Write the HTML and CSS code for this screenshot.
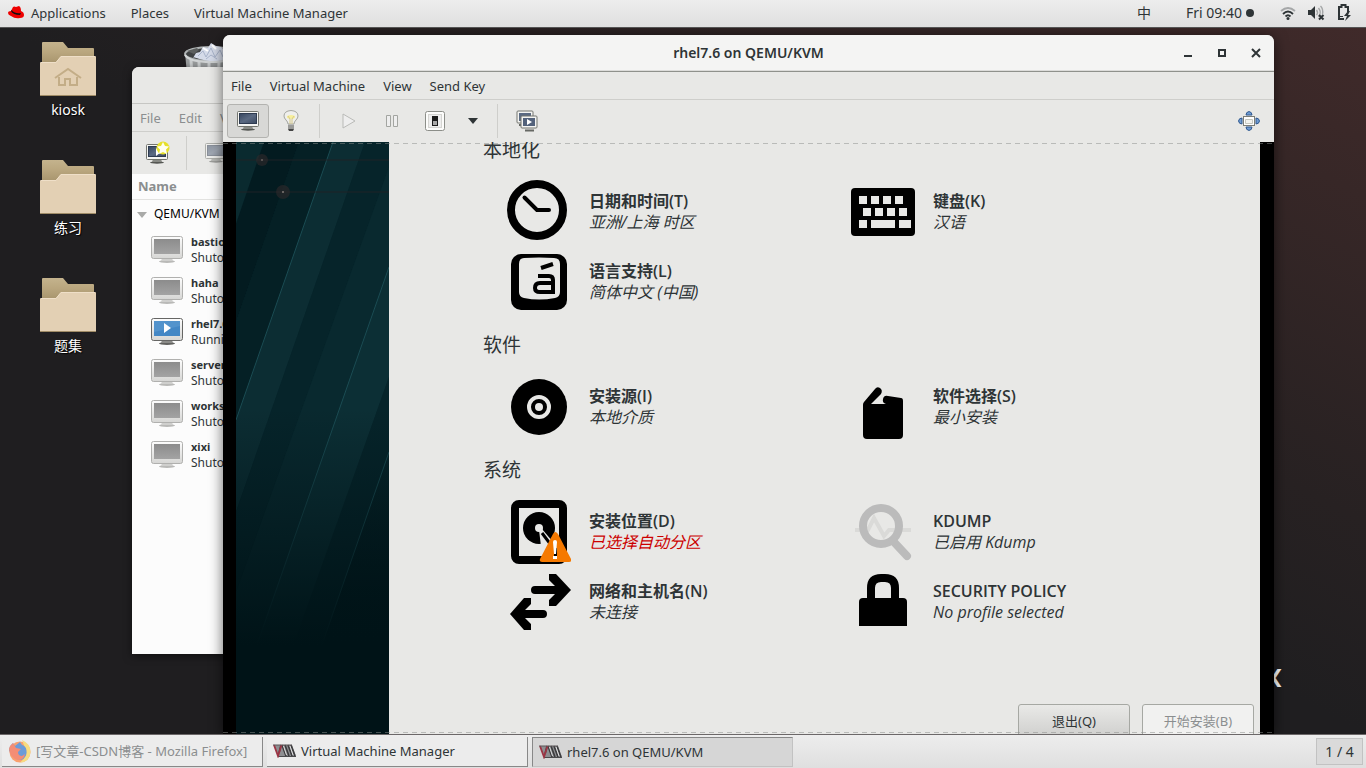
FILE: index.html
```
<!DOCTYPE html>
<html lang="zh-CN">

<head>
    <meta charset="UTF-8">
    <meta name="viewport" content="width=device-width, initial-scale=1.0">
    <title>rhel7.6 on QEMU/KVM</title>
    <link rel="stylesheet" href="styles.css">
</head>

<body>
    <!-- shared icons -->
    <svg class="defs" width="0" height="0" aria-hidden="true">
        <defs>
            <linearGradient id="g-off" x1="0" y1="0" x2="0" y2="1">
                <stop offset="0" stop-color="#8c8c8c" />
                <stop offset="1" stop-color="#a3a3a3" />
            </linearGradient>
            <linearGradient id="g-frame" x1="0" y1="0" x2="0" y2="1">
                <stop offset="0" stop-color="#fdfdfd" />
                <stop offset="1" stop-color="#d6d6d4" />
            </linearGradient>
            <linearGradient id="g-screen" x1="0" y1="0" x2="1" y2="1">
                <stop offset="0" stop-color="#36465f" />
                <stop offset="0.5" stop-color="#5b6a82" />
                <stop offset="1" stop-color="#3c4961" />
            </linearGradient>
            <linearGradient id="g-back" x1="0" y1="0" x2="0" y2="1">
                <stop offset="0" stop-color="#c4b38d" />
                <stop offset="0.5" stop-color="#b9a67e" />
                <stop offset="1" stop-color="#a8956e" />
            </linearGradient>
            <symbol id="vm-off" viewBox="0 0 32 27">
                <ellipse cx="16" cy="25.500" rx="8" ry="1.500" fill="#b9b9b7" />
                <path d="M11 22h10l1 3H10z" fill="#cfcfcd" />
                <rect x="0.500" y="0.500" width="31" height="22" rx="2" fill="url(#g-frame)" stroke="#b0b0ae" />
                <rect x="3" y="3" width="26" height="15" fill="url(#g-off)" />
            </symbol>
            <symbol id="vm-on" viewBox="0 0 32 27">
                <ellipse cx="16" cy="25.500" rx="8" ry="1.500" fill="#62625f" />
                <path d="M11 22h10l1 3H10z" fill="#8b8b88" />
                <rect x="0.500" y="0.500" width="31" height="22" rx="2" fill="url(#g-frame)" stroke="#666664" />
                <rect x="3" y="3" width="26" height="15" fill="#4387c5" />
                <path d="M3 3h26v5L3 14z" fill="#5393cc" />
                <path d="M13 5v10l7-5z" fill="#fff" />
            </symbol>
            <symbol id="monitor" viewBox="0 0 24 20">
                <ellipse cx="12" cy="18.500" rx="7" ry="1.200" fill="#555753" />
                <path d="M8 15h8l1 3H7z" fill="#888a85" />
                <rect x="1.500" y="0.500" width="21" height="15" rx="1" fill="#f4f4f2" stroke="#73756f" />
                <rect x="3.500" y="2.500" width="17" height="10" fill="url(#g-screen)" stroke="#2e3b50" />
            </symbol>
            <symbol id="folder" viewBox="0 0 56 54">
                <path d="M2 21V1q0-1 1-1h20l5 6h25q1 0 1 1v14z" fill="url(#g-back)" />
                <path d="M0 53V21q0-1 1-1h15l5-6h34q1 0 1 1v38z" fill="#e3d0b4" />
                <path d="M0 53.500h56" stroke="#9f8b66" />
                <path d="M1 20.500h15l5-6h34" fill="none" stroke="#efdfc8" />
            </symbol>
            <symbol id="vmm" viewBox="0 0 24 14">
                <path d="M1 1h18l4 11H5z" fill="#8e8f92" />
                <path d="M8 1l-2 8M9 1l4 11M12 1l4 11M15 1l4 11M18 1l4 11" fill="none" stroke="#3c3c3e" stroke-width="1.600" />
                <path d="M10.500 2l3 9M17 2l3 9" stroke="#e0e0e0" />
                <path d="M5 12.500h18" stroke="#4a4a4c" />
                <path d="M1 1l4 11L8.500 1" fill="none" stroke="#9c3444" stroke-width="1.800" />
                <path d="M0 1h19" stroke="#5c5658" />
            </symbol>
        </defs>
    </svg>

    <header class="topbar">
        <nav class="top-menu">
            <button class="flat apps">
                <svg width="16" height="13" viewBox="0 0 16 13">
                    <path d="M0 7q0-2 3-2l2-4q1-1 3 0l3-1q2 1 2 5 3 1 3 4t-4 3Q7 13 3 10 0 9 0 7z" fill="#e00" />
                    <path d="M3 5q2 4 9 4l1-2Q7 8 3.500 4z" fill="#111" />
                </svg>
                Applications
            </button>
            <button class="flat">Places</button>
            <button class="flat">Virtual Machine Manager</button>
        </nav>
        <div class="top-status">
            <button class="flat">中</button>
            <button class="flat clock">Fri 09:40 <span class="dot"></span></button>
            <button class="flat tray" aria-label="System">
                <svg width="16" height="16" viewBox="0 0 16 16" fill="none" stroke="#2e3436" stroke-width="1.800">
                    <path d="M1 6q7-6 14 0" stroke="#a5a7a8" />
                    <path d="M3 9q5-5 10 0M5.500 11.500q2.500-2.500 5 0" />
                    <circle cx="8" cy="13.500" r="1.500" fill="#2e3436" stroke="none" />
                </svg>
                <svg width="18" height="16" viewBox="0 0 18 16">
                    <path d="M1 5h3l4-4v13L4 10H1z" fill="#2e3436" />
                    <path d="M9.500 5q2 2.500 0 5M11.500 3q3.500 4.500 0 9M13.500 1q3 3 2 8" fill="none" stroke="#a5a7a8" stroke-width="1.400" />
                    <path d="M12 10l4.500 4.500M16.500 10L12 14.500" stroke="#2e3436" stroke-width="2" />
                </svg>
                <svg width="16" height="17" viewBox="0 0 16 17">
                    <path d="M12 8V3H9.500V1h-4v2H3v12h5" fill="none" stroke="#2e3436" stroke-width="2" />
                    <path d="M4 12h3v1H4z" fill="#2e3436" />
                    <path d="M12 7l-4 5h3l-2 5 6-6h-3l2-4z" fill="#2e3436" />
                </svg>
            </button>
        </div>
    </header>

    <main class="desktop">
        <div class="shortcuts">
            <a class="shortcut" href="#kiosk">
                <svg width="56" height="54" viewBox="0 0 56 54">
                    <use href="#folder" width="56" height="54" />
                    <path d="M15 36l13-9 13 9M19 35v8h6v-6h5v6h7v-8" fill="none" stroke="#c3ad87" stroke-width="2" />
                </svg>
                <span>kiosk</span>
            </a>
            <a class="shortcut" href="#practice">
                <svg width="56" height="54"><use href="#folder" width="56" height="54" /></svg>
                <span>练习</span>
            </a>
            <a class="shortcut" href="#questions">
                <svg width="56" height="54"><use href="#folder" width="56" height="54" /></svg>
                <span>题集</span>
            </a>
        </div>

        <svg class="trash" width="56" height="56" viewBox="0 0 56 56">
            <path d="M1 10l4 42q22 7 44 0l4-42z" fill="#9a9d9e" />
            <path d="M7 17l2 34M15 19l1 34M25 20v34M35 19l-1 34" stroke="#cdd0d1" stroke-width="3" />
            <ellipse cx="27" cy="11" rx="26" ry="7" fill="#3f4243" stroke="#b0b4b5" stroke-width="2" />
            <path d="M9 15l3-5 4-1 3-5 5 1 3-5 5 3 5 1 5 5 7 6q-18 7-40-1z" fill="#d5dbe9" />
            <path d="M3 8l10-3 2 2-5 4z" fill="#5c5f5e" />
            <path d="M14 13l5-5 3 6 5-9 4 9 5-7 3 7M22 16l5-4 6 4" fill="none" stroke="#a9b4cb" />
            <path d="M19 5l5 3M28 2l4 4" stroke="#fff" stroke-width="2" />
            <path d="M1 12q4 7 26 7t26-7" fill="none" stroke="#d3d6d7" stroke-width="2" />
        </svg>

        <div class="guest-arrow">❮</div>

        <!-- manager window, in the background -->
        <section class="window manager">
            <div class="titlebar"></div>
            <nav class="menubar">
                <button class="flat">File</button>
                <button class="flat">Edit</button>
                <button class="flat">View</button>
            </nav>
            <div class="toolbar">
                <button class="tool" aria-label="New">
                    <svg width="26" height="24" viewBox="0 0 26 24">
                        <use href="#monitor" x="0" y="3" width="24" height="20" />
                        <path d="M11 7v8l5-4z" fill="#fff" />
                        <circle cx="18" cy="7" r="6.500" fill="#e6e02a" />
                        <path d="M18 1l2 4 4 .5-3 3 1 4.500-4-2-4 2 1-4.500-3-3 4-.5z" fill="#fffff0" />
                    </svg>
                </button>
                <span class="sep"></span>
                <button class="tool dim" aria-label="Open">
                    <svg width="24" height="20"><use href="#monitor" width="24" height="20" /></svg>
                </button>
            </div>
            <table class="vm-list">
                <thead>
                    <tr><th>Name</th></tr>
                </thead>
                <tbody>
                    <tr class="host"><td><span class="tri"></span>QEMU/KVM</td></tr>
                </tbody>
            </table>
        </section>

        <!-- console window -->
        <section class="window console">
            <div class="titlebar">
                <h1>rhel7.6 on QEMU/KVM</h1>
                <div class="win-buttons">
                    <button aria-label="Minimize"><svg width="10" height="10"><path d="M1 8h8" stroke="#2e3436" stroke-width="2" /></svg></button>
                    <button aria-label="Maximize"><svg width="10" height="10"><rect x="2" y="2" width="6" height="6" fill="none" stroke="#2e3436" stroke-width="2" /></svg></button>
                    <button aria-label="Close"><svg width="10" height="10"><path d="M1 1l8 8M9 1L1 9" stroke="#2e3436" stroke-width="2" /></svg></button>
                </div>
            </div>
            <nav class="menubar">
                <button class="flat">File</button>
                <button class="flat">Virtual Machine</button>
                <button class="flat">View</button>
                <button class="flat">Send Key</button>
            </nav>
            <div class="toolbar">
                <button class="tool active" aria-label="Console">
                    <svg width="24" height="20"><use href="#monitor" width="24" height="20" /></svg>
                </button>
                <button class="tool" aria-label="Details">
                    <svg width="16" height="22" viewBox="0 0 16 22">
                        <path d="M5 14q0-2-2-4Q1 8 1 6q0-5 7-5.500Q15 1 15 6q0 2-2 4t-2 4z" fill="#efefec" stroke="#a3a59f" />
                        <path d="M4 6q4-2 8 0v2q-4 2-8 0z" fill="#f7ef9c" />
                        <path d="M5 6l2 3v5M11 6L9 9v5" fill="none" stroke="#d6c98a" />
                        <path d="M5 14h6v5H5z" fill="#b9bab7" />
                        <path d="M5 16h6M5 18h6" stroke="#7c7d7a" />
                        <path d="M5 19h6l-1 2H6z" fill="#444" />
                    </svg>
                </button>
                <span class="sep"></span>
                <button class="tool" aria-label="Run">
                    <svg width="16" height="16"><path d="M2 1l12 7-12 7z" fill="#eee" stroke="#b9bab7" /></svg>
                </button>
                <button class="tool" aria-label="Pause">
                    <svg width="14" height="14"><path d="M1.500 1.500h4v11h-4zM8.500 1.500h4v11h-4z" fill="#eee" stroke="#a3a5a1" /></svg>
                </button>
                <button class="tool" aria-label="Shut down">
                    <svg width="20" height="20" viewBox="0 0 20 20">
                        <rect x="0.500" y="0.500" width="19" height="19" rx="2" fill="#fcfcfb" stroke="#8c8e89" />
                        <rect x="3.500" y="3.500" width="13" height="13" fill="#eee" stroke="#d5d5d2" />
                        <path d="M7 5h6v10H7z" fill="#1c1c1c" />
                        <path d="M8 10h4v4H8z" fill="#a8a8a8" />
                    </svg>
                </button>
                <button class="tool narrow" aria-label="Shut down options">
                    <svg width="10" height="6"><path d="M0 0h10L5 6z" fill="#2e3436" /></svg>
                </button>
                <span class="sep"></span>
                <button class="tool" aria-label="Snapshots">
                    <svg width="22" height="22" viewBox="0 0 22 22">
                        <rect x="1" y="1" width="16" height="12" rx="1" fill="#f4f4f2" stroke="#73756f" />
                        <rect x="3" y="3" width="12" height="8" fill="#5b6a82" />
                        <path d="M3 15h5M9 20.500h9" stroke="#666864" stroke-width="2" />
                        <rect x="5" y="6" width="16" height="12" rx="1" fill="#f4f4f2" stroke="#73756f" />
                        <rect x="7" y="8" width="12" height="8" fill="#53627b" />
                        <path d="M11 9v6l5-3z" fill="#fff" />
                    </svg>
                </button>
                <button class="tool fullscreen" aria-label="Full screen">
                    <svg width="22" height="20" viewBox="0 0 22 20">
                        <g fill="#6d9bd3" stroke="#31598f">
                            <path d="M8 4q0-3 3-3.500 3 .5 3 3.500zM8 16q0 3 3 3.500 3-.5 3-3.500zM4 7Q1 7 .5 10 1 13 4 13zM18 7q3 0 3.500 3-.5 3-3.500 3z" />
                        </g>
                        <rect x="5.500" y="5.500" width="11" height="9" fill="#fff" stroke="#7b7d77" />
                        <path d="M7.500 8.500h7v4h-7z" fill="#f3f3ef" stroke="#c6c8c0" />
                    </svg>
                </button>
            </div>

            <div class="guest">
                <svg class="stripes" viewBox="0 0 153 592" preserveAspectRatio="none">
                    <defs>
                        <linearGradient id="g-side" x1="0" y1="0" x2="0" y2="1">
                            <stop offset="0" stop-color="#08262b" />
                            <stop offset="0.500" stop-color="#08262c" />
                            <stop offset="0.850" stop-color="#001418" />
                            <stop offset="1" stop-color="#001216" />
                        </linearGradient>
                        <linearGradient id="g-fade" gradientUnits="userSpaceOnUse" x1="0" y1="0" x2="0" y2="592">
                            <stop offset="0.450" stop-color="#001317" stop-opacity="0" />
                            <stop offset="0.850" stop-color="#001317" />
                        </linearGradient>
                    </defs>
                    <path d="M0 0h153v592H0z" fill="url(#g-side)" />
                    <path d="M0 0h28L0 82z" fill="#0a2a2f" />
                    <path d="M28 0h35L0 180V82z" fill="#031b20" />
                    <path d="M63 0h34L0 278v-98z" fill="#052025" />
                    <path d="M97 0h32L0 370V278z" fill="#0c2d33" />
                    <path d="M129 0h24v25L0 450v-80z" fill="#06242a" />
                    <path d="M153 25v100L8 540H0v-90z" fill="#09292f" />
                    <path d="M153 125v110L40 560H0z" fill="#0c2f35" />
                    <path d="M153 235v75L60 580H30z" fill="#06242a" />
                    <path d="M97 0L0 278M153 125L15 520M153 310L80 520" fill="none" stroke="#1b4c53" />
                    <path d="M0 18h153M0 50h153" stroke="#1f2327" />
                    <circle cx="26" cy="18" r="6" fill="#302a2c" opacity="0.600" />
                    <circle cx="47" cy="50" r="7" fill="#302a2c" opacity="0.600" />
                    <circle cx="26" cy="18" r="1" fill="#66605e" />
                    <circle cx="47" cy="50" r="1" fill="#807874" />
                    <path d="M0 0h153v592H0z" fill="url(#g-fade)" />
                </svg>

                <div class="hub">
                    <div class="hub-scroll">
                        <section class="category">
                            <h2>本地化</h2>
                            <div class="spokes">
                                <button class="spoke">
                                    <svg width="64" height="64" viewBox="0 0 64 64">
                                        <circle cx="30" cy="30" r="26" fill="none" stroke="#000" stroke-width="8" />
                                        <path d="M17.500 17.500L30 30h12" fill="none" stroke="#000" stroke-width="4" stroke-linecap="round" />
                                    </svg>
                                    <span class="spoke-text"><b>日期和时间(T)</b><i>亚洲/上海 时区</i></span>
                                </button>
                                <button class="spoke">
                                    <svg width="64" height="64" viewBox="0 0 64 64">
                                        <rect y="8" width="64" height="48" rx="4" />
                                        <path fill="#e8e8e6" d="M8 16h8v8H8zM20 16h8v8h-8zM32 16h8v8h-8zM44 16h8v8h-8zM12 28h8v8h-8zM24 28h8v8h-8zM36 28h8v8h-8zM48 28h8v8h-8zM8 40h8v8H8zM20 40h24v8H20zM48 40h12v8H48z" />
                                    </svg>
                                    <span class="spoke-text"><b>键盘(K)</b><i>汉语</i></span>
                                </button>
                                <button class="spoke">
                                    <svg width="64" height="64" viewBox="0 0 64 64">
                                        <rect x="4" y="4" width="56" height="56" rx="10" />
                                        <path d="M17 8q15-1 30 0 6 0 6 6v28q0 5-5 6-16 3-31 0-5-1-5-6V14q0-6 5-6z" fill="#e8e8e6" />
                                        <path d="M34 18l12-4M31 26h11q4 0 4 4v12H33q-5 0-5-4 0-5 5-5h12" fill="none" stroke="#000" stroke-width="4" />
                                    </svg>
                                    <span class="spoke-text"><b>语言支持(L)</b><i>简体中文 (中国)</i></span>
                                </button>
                            </div>
                        </section>

                        <section class="category">
                            <h2>软件</h2>
                            <div class="spokes">
                                <button class="spoke">
                                    <svg width="64" height="64" viewBox="0 0 64 64">
                                        <circle cx="32" cy="32" r="28" />
                                        <circle cx="32" cy="32" r="10" fill="none" stroke="#e8e8e6" stroke-width="4" />
                                        <circle cx="32" cy="32" r="4" fill="#e8e8e6" />
                                    </svg>
                                    <span class="spoke-text"><b>安装源(I)</b><i>本地介质</i></span>
                                </button>
                                <button class="spoke">
                                    <svg width="64" height="64" viewBox="0 0 64 64">
                                        <path d="M12 30q0-2 1-3l11-13q2-3 5-1t1 6L20 29h15q-4-1-3-5t5-3l13 2q2 0 2 3v34q0 4-4 4H16q-4 0-4-4z" />
                                    </svg>
                                    <span class="spoke-text"><b>软件选择(S)</b><i>最小安装</i></span>
                                </button>
                            </div>
                        </section>

                        <section class="category">
                            <h2>系统</h2>
                            <div class="spokes">
                                <button class="spoke">
                                    <svg width="64" height="64" viewBox="0 0 64 64">
                                        <rect x="8" y="4" width="48" height="56" rx="4" fill="none" stroke="#000" stroke-width="8" />
                                        <circle cx="32" cy="28" r="16" />
                                        <circle cx="32" cy="28" r="4" fill="#e8e8e6" />
                                        <path d="M32 30l2 16 12-4-11-13z" fill="#e8e8e6" />
                                        <path d="M35 33l9 12" stroke="#000" stroke-width="3" />
                                        <path d="M46 34q2-4 5 0l13 25q1 3-2 3H35q-3 0-2-3z" fill="#f57900" />
                                        <path d="M48.500 48v9" stroke="#000" stroke-width="3" />
                                        <path d="M46 42q0-2 2-2t2 2l-1 12h-2zM46 56h4v3h-4z" fill="#fff" />
                                    </svg>
                                    <span class="spoke-text"><b>安装位置(D)</b><i class="error">已选择自动分区</i></span>
                                </button>
                                <button class="spoke">
                                    <svg width="64" height="64" viewBox="0 0 64 64">
                                        <path d="M4 30h13l6-12 10 18 5-6h22" fill="none" stroke="#dadad8" stroke-width="4" />
                                        <circle cx="30" cy="26" r="18" fill="none" stroke="#bbb" stroke-width="8" />
                                        <path d="M42 41l14 15" stroke="#bbb" stroke-width="8" stroke-linecap="round" />
                                    </svg>
                                    <span class="spoke-text"><b>KDUMP</b><i>已启用 Kdump</i></span>
                                </button>
                                <button class="spoke">
                                    <svg width="64" height="64" viewBox="0 0 64 64">
                                        <path d="M28 16h20l-6-6V4h7l15 16-15 16h-7v-6l6-6H28q-4 0-4-4t4-4z" />
                                        <path d="M36 40H18l6-6v-6h-7L3 44l14 16h7v-6l-6-6h18q4 0 4-4t-4-4z" />
                                    </svg>
                                    <span class="spoke-text"><b>网络和主机名(N)</b><i>未连接</i></span>
                                </button>
                                <button class="spoke">
                                    <svg width="64" height="64" viewBox="0 0 64 64">
                                        <path d="M20 32V18q0-10 10-10h4q10 0 10 10v14" transform="translate(0 0)" fill="none" stroke="#000" stroke-width="8" />
                                        <path d="M8 32q0-4 4-4h40q4 0 4 4v24H8z" />
                                    </svg>
                                    <span class="spoke-text"><b>SECURITY POLICY</b><i>No profile selected</i></span>
                                </button>
                            </div>
                        </section>
                    </div>
                    <div class="hub-actions">
                        <button class="action">退出(Q)</button>
                        <button class="action" disabled>开始安装(B)</button>
                    </div>
                </div>
            </div>
        </section>
    </main>

    <footer class="taskbar">
        <button class="task minimized">
            <svg width="24" height="24" viewBox="0 0 24 24">
                <circle cx="12" cy="13" r="10.500" fill="#f9a06e" />
                <path d="M1 12q0-5 4-8l2 3 5-4 2 3q5 1 5 7t-6 8q-7 0-9-7z" fill="#6b9bd8" />
                <path d="M14 1q9 4 8.500 12Q22 23 12 23.500q4-3 6-7 2-6-2-10z" fill="#f7dc80" />
                <path d="M1 10q1-4 4-6l3 5 5 1-3 3q0 4 4 4l3-2q-1 6-7 6-8-2-9-11z" fill="#f48d75" />
            </svg>
            <span>[写文章-CSDN博客 - Mozilla Firefox]</span>
        </button>
        <button class="task">
            <svg width="24" height="14"><use href="#vmm" width="24" height="14" /></svg>
            <span>Virtual Machine Manager</span>
        </button>
        <button class="task current">
            <svg width="24" height="14"><use href="#vmm" width="24" height="14" /></svg>
            <span>rhel7.6 on QEMU/KVM</span>
        </button>
        <button class="workspace">1 / 4</button>
    </footer>

    <script>
        const machines = [
            ['bastion', 'Shutoff'],
            ['haha', 'Shutoff'],
            ['rhel7.6', 'Running'],
            ['server', 'Shutoff'],
            ['workstation', 'Shutoff'],
            ['xixi', 'Shutoff']
        ];

        const tbody = document.querySelector('.vm-list tbody');

        machines.forEach(([name, state]) => {
            const icon = state === 'Running' ? 'vm-on' : 'vm-off';
            tbody.insertAdjacentHTML('beforeend', `
                <tr class="vm">
                    <td>
                        <div class="vm-row">
                            <svg width="32" height="27"><use href="#${icon}" width="32" height="27" /></svg>
                            <div><b>${name}</b><br>${state}</div>
                        </div>
                    </td>
                </tr>
            `);
        });
    </script>
</body>

</html>
```
FILE: styles.css
```
* {
    box-sizing: border-box;
}

body {
    margin: 0;
    height: 100vh;
    display: flex;
    flex-direction: column;
    overflow: hidden;
    font-family: "Noto Sans", "Noto Sans CJK SC", sans-serif;
    font-size: 14px;
    line-height: 20px;
    color: #2e3436;
    background: #1f1e20;
}

button {
    font: inherit;
    color: inherit;
    margin: 0;
    padding: 0;
    border: 0;
    background: none;
    white-space: nowrap;
}

svg {
    display: block;
    flex: none;
}

.defs {
    position: absolute;
}

/* top panel */
.topbar {
    flex: none;
    height: 28px;
    padding: 0 14px 2px 8px;
    display: flex;
    justify-content: space-between;
    background: linear-gradient(#ededed, #dfdfdf);
    border-bottom: 1px solid #555;
}

.top-menu,
.top-status {
    display: flex;
    align-items: center;
}

.top-menu {
    gap: 25px;
    font-size: 13px;
}

.top-status {
    gap: 26px;
}

.top-status .clock {
    margin-left: 9px;
}

.apps,
.clock,
.tray {
    display: flex;
    align-items: center;
    gap: 7px;
}

.clock {
    gap: 4px;
}

.tray {
    gap: 11px;
}

.dot {
    width: 8px;
    height: 8px;
    border-radius: 50%;
    background: #2e3436;
}

/* desktop */
.desktop {
    flex: 1;
    min-height: 0;
    position: relative;
    overflow: hidden;
    background: linear-gradient(to top right, #1f1e20 50%, #272122 65%, #372727 88%, #402a2a);
}

.shortcuts {
    width: 136px;
    padding-top: 14px;
    display: flex;
    flex-direction: column;
    align-items: center;
    gap: 40px;
}

.shortcut {
    display: flex;
    flex-direction: column;
    align-items: center;
    gap: 4px;
    color: #fff;
    text-decoration: none;
    text-shadow: 1px 1px 1px #000;
}

.trash {
    position: absolute;
    left: 184px;
    top: 15px;
}

.guest-arrow {
    position: absolute;
    right: 82px;
    bottom: 47px;
    font-family: "DejaVu Sans", sans-serif;
    font-size: 18px;
    color: #fff;
}

/* windows */
.window {
    position: absolute;
    display: flex;
    flex-direction: column;
    border-radius: 7px 7px 0 0;
    background: #e8e8e6;
    box-shadow: 0 2px 14px rgba(0, 0, 0, 0.6);
    overflow: hidden;
}

.manager {
    left: 132px;
    top: 39px;
    width: 560px;
    height: 587px;
    background: #fcfcfc;
    color: #8b8e8f;
    box-shadow: 0 2px 8px rgba(0, 0, 0, 0.5);
}

.console {
    left: 223px;
    right: 92px;
    top: 7px;
    bottom: 0;
}

.titlebar {
    flex: none;
    height: 37px;
    display: flex;
    align-items: center;
    background: #e8e8e6;
    border-bottom: 1px solid #c6c6c3;
}

.console .titlebar {
    background: #f4f4f3;
    border-bottom: 1px solid #8f918c;
    box-shadow: inset 0 -1px #dcdcda;
}

.titlebar h1 {
    flex: 1;
    margin: 0;
    padding-left: 100px;
    text-align: center;
    font-size: 14px;
    font-weight: 600;
}

.win-buttons {
    width: 100px;
    padding-right: 13px;
    display: flex;
    justify-content: flex-end;
    gap: 24px;
}

.menubar {
    flex: none;
    height: 28px;
    padding: 0 8px;
    display: flex;
    align-items: center;
    gap: 18px;
    background: #e8e8e6;
    border-bottom: 1px solid #cececb;
    font-size: 13px;
}

.toolbar {
    flex: none;
    height: 42px;
    padding: 0 4px;
    display: flex;
    align-items: center;
    background: #e8e8e6;
}

.tool {
    width: 43px;
    height: 34px;
    display: flex;
    align-items: center;
    justify-content: center;
}

.tool.active {
    width: 42px;
    border: 1px solid #b3b3b0;
    border-radius: 3px;
    background: #d8d8d6;
}

.tool.narrow {
    width: 34px;
}

.tool.dim {
    opacity: 0.5;
}

.tool.fullscreen {
    margin-left: auto;
}

.sep {
    width: 1px;
    height: 34px;
    margin: 0 7px;
    background: #cececb;
}

/* machine list */
.vm-list {
    border-collapse: collapse;
    font-size: 12px;
    line-height: 16px;
    color: #2e3436;
}

.vm-list th {
    height: 25px;
    padding: 0 6px;
    border-bottom: 1px solid #e2e2e0;
    text-align: left;
    font-size: 13px;
    color: #8b8e8f;
}

.vm-list td {
    padding: 0;
    height: 41px;
}

.vm-list b {
    font-size: 11px;
}

.vm-list .host td {
    height: 30px;
    padding-left: 5px;
    color: #000;
}

.tri {
    display: inline-block;
    margin-right: 7px;
    border: 5px solid transparent;
    border-top: 6px solid #a9aaa8;
    border-bottom: 0;
}

.vm-row {
    padding-left: 19px;
    display: flex;
    align-items: center;
    gap: 8px;
}

/* guest screen */
.guest {
    flex: 1;
    min-height: 0;
    display: flex;
    position: relative;
    padding: 0 14px 0 13px;
    background: #000;
    overflow: hidden;
}

/* dashed edge over the guest display */
.guest::before,
.guest::after {
    content: "";
    position: absolute;
    left: 0;
    right: 0;
    height: 1px;
    background: repeating-linear-gradient(to right, #8a8d8b 0 5px, transparent 5px 9px);
    opacity: 0.5;
}

.guest::before {
    top: 1px;
}

.guest::after {
    bottom: 1px;
}

.stripes {
    width: 153px;
    height: 100%;
}

.hub {
    flex: 1;
    min-width: 0;
    display: flex;
    flex-direction: column;
    background: #e8e8e6;
}

.hub-scroll {
    flex: 1;
    min-height: 0;
    margin-top: -23px;
    padding-left: 94px;
}

.category {
    padding-top: 19px;
}

.category h2 {
    margin: 0 0 18px;
    font-size: 19px;
    font-weight: normal;
    line-height: 24px;
}

.spokes {
    padding-left: 24px;
    display: grid;
    grid-template-columns: 344px 344px;
    gap: 6px 0;
}

.spoke {
    display: flex;
    align-items: center;
    gap: 18px;
    text-align: left;
    font-family: "Open Sans", "Noto Sans CJK SC", sans-serif;
    font-size: 16px;
    line-height: 21px;
}

.spoke-text {
    display: flex;
    flex-direction: column;
}

.spoke b {
    font-weight: 600;
}

.error {
    color: #cc0000;
}

.hub-actions {
    margin-bottom: -4px;
    padding-right: 6px;
    display: flex;
    justify-content: flex-end;
    gap: 12px;
}

.action {
    width: 112px;
    height: 34px;
    border: 1px solid #a6a8a3;
    border-radius: 3px;
    background: linear-gradient(#e9e9e7, #cfcfcd);
    font-size: 13px;
}

.action:disabled {
    background: #f1f1f0;
    color: #8b8e8f;
}

/* window list */
.taskbar {
    flex: none;
    height: 34px;
    padding: 2px 3px 2px 2px;
    display: flex;
    align-items: center;
    gap: 4px;
    background: linear-gradient(#ededed, #dfdfdf);
    border-top: 1px solid #6b6768;
    font-size: 13px;
}

.task {
    flex: 0 1 261px;
    min-width: 0;
    height: 30px;
    padding: 0 6px;
    display: flex;
    align-items: center;
    gap: 4px;
    border-right: 1px solid #888;
    border-bottom: 1px solid #888;
    background: #ececec;
    overflow: hidden;
}

.task.minimized {
    color: #8b8e8f;
}

.task.current {
    background: #d6d6d6;
    border: 1px solid #c2c2c2;
    border-top-color: #888;
    border-left-color: #888;
}

.workspace {
    width: 47px;
    height: 27px;
    margin-left: auto;
    border: 1px solid #c2c2c2;
    background: #dadada;
    font-size: 14px;
}
```
